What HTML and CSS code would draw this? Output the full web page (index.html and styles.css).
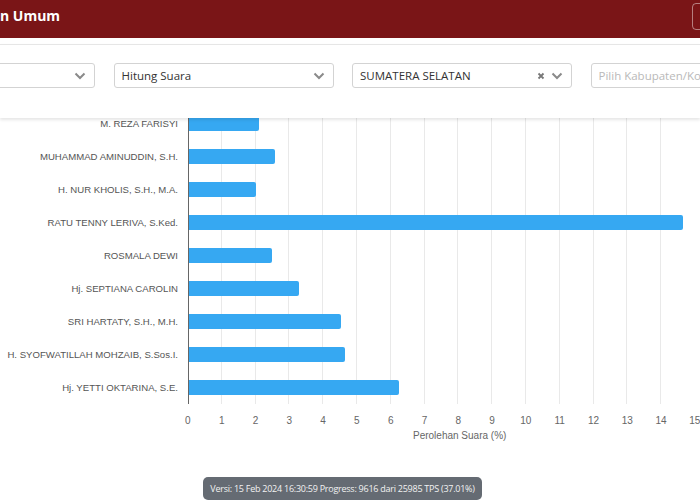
FILE: index.html
```html
<!DOCTYPE html>
<html lang="id">
<head>
<meta charset="utf-8">
<title>Hitung Suara</title>
<link rel="stylesheet" href="styles.css">
</head>
<body>
<header class="topbar">
  <h1 class="title">n Umum</h1>
  <button class="top-btn" type="button"></button>
</header>
<section class="filters">
  <div class="filter-row">
    <div class="select"><span class="select-text"></span><span class="icons"><svg class="chev" viewBox="0 0 12 8"><path d="M1.5 1.5 L6 6 L10.5 1.5"/></svg></span></div>
    <div class="select"><span class="select-text">Hitung Suara</span><span class="icons"><svg class="chev" viewBox="0 0 12 8"><path d="M1.5 1.5 L6 6 L10.5 1.5"/></svg></span></div>
    <div class="select"><span class="select-text">SUMATERA SELATAN</span><span class="icons"><svg class="clear" viewBox="0 0 8 8"><path d="M1.5 1.5 L6.5 6.5 M6.5 1.5 L1.5 6.5"/></svg><svg class="chev" viewBox="0 0 12 8"><path d="M1.5 1.5 L6 6 L10.5 1.5"/></svg></span></div>
    <div class="select"><span class="select-text placeholder">Pilih Kabupaten/Ko</span></div>
  </div>
</section>
<main class="chart">
  <div class="rows">
    <div class="row"><div class="label">M. REZA FARISYI</div><div class="track"><div class="bar" style="width:13.8%"></div></div></div>
    <div class="row"><div class="label">MUHAMMAD AMINUDDIN, S.H.</div><div class="track"><div class="bar" style="width:17.0%"></div></div></div>
    <div class="row"><div class="label">H. NUR KHOLIS, S.H., M.A.</div><div class="track"><div class="bar" style="width:13.2%"></div></div></div>
    <div class="row"><div class="label">RATU TENNY LERIVA, S.Ked.</div><div class="track"><div class="bar" style="width:97.6%"></div></div></div>
    <div class="row"><div class="label">ROSMALA DEWI</div><div class="track"><div class="bar" style="width:16.4%"></div></div></div>
    <div class="row"><div class="label">Hj. SEPTIANA CAROLIN</div><div class="track"><div class="bar" style="width:21.7%"></div></div></div>
    <div class="row"><div class="label">SRI HARTATY, S.H., M.H.</div><div class="track"><div class="bar" style="width:30.0%"></div></div></div>
    <div class="row"><div class="label">H. SYOFWATILLAH MOHZAIB, S.Sos.I.</div><div class="track"><div class="bar" style="width:30.9%"></div></div></div>
    <div class="row"><div class="label">Hj. YETTI OKTARINA, S.E.</div><div class="track"><div class="bar" style="width:41.6%"></div></div></div>
  </div>
  <div class="ticks">
    <span>0</span><span>1</span><span>2</span><span>3</span><span>4</span><span>5</span><span>6</span><span>7</span><span>8</span><span>9</span><span>10</span><span>11</span><span>12</span><span>13</span><span>14</span><span>15</span>
  </div>
  <div class="axis-title">Perolehan Suara (%)</div>
</main>
<footer class="status">
  <div class="toast">Versi: 15 Feb 2024 16:30:59 Progress: 9616 dari 25985 TPS (37.01%)</div>
</footer>
</body>
</html>
```
FILE: styles.css
```css
* { box-sizing: border-box; }
html, body { margin: 0; padding: 0; }
body {
  width: 700px;
  height: 500px;
  overflow: hidden;
  background: #ffffff;
  font-family: "Open Sans", "Liberation Sans", sans-serif;
}

.topbar {
  height: 38px;
  background: #7a1517;
  display: flex;
  align-items: flex-start;
  justify-content: space-between;
  margin-bottom: 6px;
}
.title {
  margin: 0;
  padding-top: 6px;
  color: #ffffff;
  font-size: 14px;
  font-weight: 700;
  line-height: 20px;
}
.top-btn {
  margin-top: 3px;
  width: 20px;
  height: 27px;
  margin-right: -12px;
  background: transparent;
  border: 1px solid rgba(255, 255, 255, 0.45);
  border-radius: 4px;
  padding: 0;
}

.filters {
  position: relative;
  z-index: 2;
  height: 74px;
  background: #ffffff;
  border-top: 1px solid #e6e6e6;
  box-shadow: 0 2px 3px rgba(0, 0, 0, 0.10);
  padding-top: 18px;
}
.filter-row {
  display: flex;
  gap: 18.5px;
  margin-left: -125px;
}
.select {
  flex: 0 0 220px;
  height: 25px;
  border: 1px solid #d3d3d3;
  border-radius: 3px;
  display: flex;
  align-items: center;
  justify-content: space-between;
  padding: 0 8px 0 7px;
  font-size: 11.5px;
  color: #333333;
}
.select-text { white-space: nowrap; overflow: hidden; }
.placeholder { color: #b9b9b9; }
.icons { display: flex; align-items: center; gap: 6px; }
.chev { width: 12px; height: 8px; fill: none; stroke: #8a8a8a; stroke-width: 2; }
.clear { width: 8px; height: 8px; fill: none; stroke: #777777; stroke-width: 1.8; }

.chart {
  margin-top: -11px;
  font-family: "Liberation Sans", Arial, sans-serif;
  color: #555555;
}
.rows { display: flex; flex-direction: column; }
.row {
  display: grid;
  grid-template-columns: 188px 507px;
  height: 33px;
  align-items: center;
}
.label {
  text-align: right;
  padding-right: 10px;
  font-size: 9.6px;
  white-space: nowrap;
  color: #555555;
}
.track {
  height: 100%;
  display: flex;
  align-items: center;
  border-left: 1px solid #666666;
  background-image: repeating-linear-gradient(to right, transparent 0, transparent 32.8px, #e9e9e9 32.8px, #e9e9e9 33.8px);
  background-position: -1px 0;
}
.bar {
  height: 15px;
  background: #36a8f2;
  border-radius: 0 2px 2px 0;
}

.ticks {
  display: grid;
  grid-template-columns: repeat(16, 33.8px);
  margin-left: 171px;
  margin-top: 11px;
  font-size: 10px;
  line-height: 12px;
  color: #666666;
}
.ticks span { text-align: center; }
.axis-title {
  margin-top: 3px;
  padding-left: 413px;
  font-size: 10px;
  line-height: 12px;
  color: #666666;
}

.status {
  margin-top: 33px;
  padding-left: 203px;
}
.toast {
  display: inline-block;
  width: 279px;
  height: 23px;
  line-height: 23px;
  text-align: center;
  background: #656b73;
  color: #f2f2f2;
  border-radius: 5px;
  font-family: "Open Sans", "Liberation Sans", sans-serif;
  font-size: 9px;
  white-space: nowrap;
  letter-spacing: -0.25px;
}
```
